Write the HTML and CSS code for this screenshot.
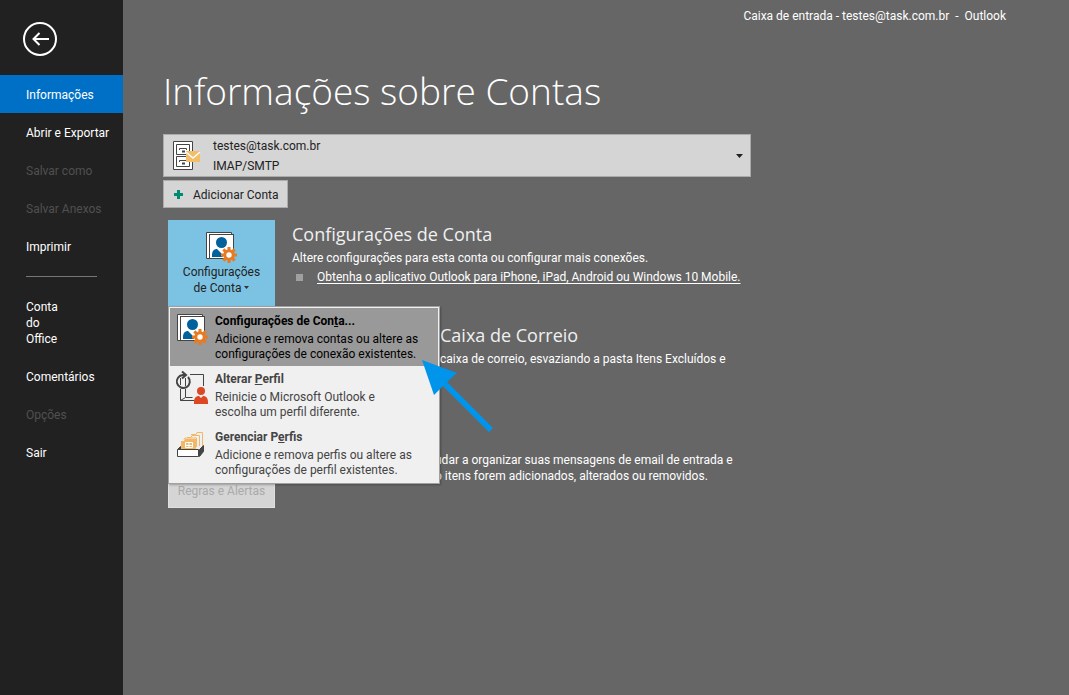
FILE: index.html
```html
<!DOCTYPE html>
<html lang="pt-BR">
<head>
<meta charset="utf-8">
<title>Caixa de entrada - Outlook</title>
<link rel="stylesheet" href="styles.css">
</head>
<body>
<svg class="defs" aria-hidden="true">
  <symbol id="account" viewBox="0 0 32 32">
    <path d="M.5 26.500V.500H25.500V2.500H3.500V26.500z" fill="#fff" stroke="#444"/>
    <rect x="3.500" y="2.500" width="24" height="24" fill="#fff" stroke="#444"/>
    <circle cx="15.500" cy="10.500" r="5.500" fill="#00619c"/>
    <path d="M6 25v-2c0-4 2-6 5-6l4 4 2 4z" fill="#00619c"/>
    <g transform="translate(23 23)">
      <circle r="4.200" fill="#fff" stroke="#e87b22" stroke-width="3"/>
      <g fill="#e87b22">
        <path id="tooth" d="M-1.500-8h3v3h-3zM-1.500 5h3v3h-3z"/><use href="#tooth" transform="rotate(45)"/><use href="#tooth" transform="rotate(90)"/><use href="#tooth" transform="rotate(135)"/>
      </g>
    </g>
  </symbol>
</svg>
<div class="app">
  <nav class="sidebar">
    <button class="back" aria-label="Voltar">
      <svg width="34" height="34" viewBox="0 0 34 34" fill="none" stroke="#fff" stroke-width="2"><circle cx="17" cy="17" r="16"/><path d="M26 17H11M16.500 11l-6 6 6 6"/></svg>
    </button>
    <button class="item active">Informações</button>
    <button class="item">Abrir e Exportar</button>
    <button class="item" disabled>Salvar como</button>
    <button class="item" disabled>Salvar Anexos</button>
    <button class="item">Imprimir</button>
    <hr>
    <button class="item office">Conta do Office</button>
    <button class="item">Comentários</button>
    <button class="item" disabled>Opções</button>
    <button class="item">Sair</button>
  </nav>
  <main>
    <div class="caption">Caixa de entrada - testes@task.com.br &nbsp;-&nbsp; Outlook</div>
    <h1>Informações sobre Contas</h1>
    <button class="account">
      <svg width="28" height="30" viewBox="0 0 28 30" fill="none" stroke="#444">
        <path d="M.5.500h19v28H.5z" fill="#fff"/><path d="M3.500 3.500h13v10h-13zM3.500 15.500h13v10h-13zM6.500 9V7.500h7V9M6.500 21v-1.500h7V21"/><path d="M9 10.500h3M9 22.500h3" stroke-width="2"/>
        <path d="M13 10h14v11H13z" fill="#f4bd68" stroke="none"/><path d="M13 11l7 6 7-6" stroke="#fff" stroke-width="1.500"/>
      </svg>
      <span class="who">testes@task.com.br<br>IMAP/SMTP</span>
      <svg width="7" height="4" viewBox="0 0 7 4"><path d="M0 0h7L3.500 4z" fill="#222"/></svg>
    </button>
    <button class="add">
      <svg width="9" height="9" viewBox="0 0 9 9"><path d="M3 0h3v3h3v3H6v3H3V6H0V3h3z" fill="#008b70"/></svg>
      Adicionar Conta
    </button>
    <div class="sections">
      <div class="launcher">
        <button class="tile selected" aria-haspopup="menu" aria-expanded="true">
          <svg width="32" height="32"><use href="#account"/></svg>
          <span>Configurações<br>de Conta <svg width="5" height="3" viewBox="0 0 5 3"><path d="M0 0h5L2.500 3z" fill="#333"/></svg></span>
        </button>
        <div class="menu" role="menu">
          <button class="option current" role="menuitem">
            <svg width="32" height="32"><use href="#account"/></svg>
            <span><b>Configurações de Con<u>t</u>a...</b>Adicione e remova contas ou altere as<br>configurações de conexão existentes.</span>
          </button>
          <button class="option" role="menuitem">
            <svg width="32" height="32" viewBox="0 0 32 32" fill="none" stroke="#444">
              <path d="M13 2.500h13.500V14M3.500 17v11.500H17M8.500 17v8M3.500 28.500l5-3h7M3.500 6v7M8.500 6v8"/>
              <path d="M11 5a6.500 6.500 0 1 1-5-2H8M5 -.5l4 3.500-4 3.500" stroke-width="2"/>
              <circle cx="24" cy="19" r="4" fill="#dc4724" stroke="none"/><path d="M17 32v-2c0-4 2-6 5-6l2 2 2-2c3 0 5 2 5 6v2z" fill="#dc4724" stroke="none"/>
            </svg>
            <span><b>Alterar <u>P</u>erfil</b>Reinicie o Microsoft Outlook e<br>escolha um perfil diferente.</span>
          </button>
          <button class="option" role="menuitem">
            <svg width="32" height="32" viewBox="0 0 32 32" fill="none" stroke="#f2b767">
              <path d="M14 4.500h5l1-2h5.500V16M10 7.500h4l1-2h7.500V16M7 9.500l1-1.500h11.500V17"/><path d="M4 20V11h3l1-2h11v11z" fill="#f2b767" stroke="none"/><path d="M8.500 12.500h7v5h-7zM8 15.500h8M12 12v5" stroke="#fff"/>
              <path d="M22.500 19.500l4-4v6l-4 5zM.5 19.500l3-3v3z" fill="#444" stroke="#444"/><path d="M.5 19.500h21v7H.5z" fill="#fff" stroke="#444"/>
            </svg>
            <span><b>Gerenciar P<u>e</u>rfis</b>Adicione e remova perfis ou altere as<br>configurações de perfil existentes.</span>
          </button>
        </div>
        <svg class="pointer" width="72" height="74" viewBox="0 0 72 74" aria-hidden="true"><path d="M0 0l35 13-10 9 46 46-4 4-46-46-9 9z" fill="#0094ea"/></svg>
      </div>
      <section>
        <h2>Configurações de Conta</h2>
        <p>Altere configurações para esta conta ou configurar mais conexões.</p>
        <ul><li><a href="#">Obtenha o aplicativo Outlook para iPhone, iPad, Android ou Windows 10 Mobile.</a></li></ul>
      </section>
      <section class="mailbox">
        <h2>Caixa de Correio</h2>
        <p>caixa de correio, esvaziando a pasta Itens Excluídos e</p>
      </section>
      <button class="tile rules" disabled>Regras e Alertas</button>
      <section class="alerts">
        <p>udar a organizar suas mensagens de email de entrada e<br>o itens forem adicionados, alterados ou removidos.</p>
      </section>
    </div>
  </main>
</div>
</body>
</html>
```
FILE: styles.css
```css
* { box-sizing: border-box; }
body { margin: 0; background: #666; color: #fff; font: 12px/16px Roboto, "Open Sans", sans-serif; }
button { font: inherit; color: inherit; text-align: left; border: 0; background: none; padding: 0; border-radius: 0; }
h1, h2, p, ul { margin: 0; padding: 0; font-weight: 400; }
svg { flex: none; overflow: visible; }
.defs { position: absolute; width: 0; height: 0; }
.app { display: grid; grid-template-columns: 123px 1fr; min-height: 100vh; }

.sidebar { display: flex; flex-direction: column; background: #212121; padding-top: 22px; }
.back { align-self: flex-start; margin: 0 0 19px 23px; height: 34px; }
.item { min-height: 38px; padding: 12px 0 10px 26px; white-space: nowrap; }
.item.active { background: #0070c6; }
.item:disabled { color: #505050; }
.item.office { white-space: normal; padding-right: 60px; }
.sidebar hr { width: 71px; margin: 11px 0 10px 26px; border: 0; border-top: 1px solid #777; }

main { padding: 8px 63px 8px 40px; }
.caption { text-align: right; }
h1, h2 { font-family: "Open Sans", "Noto Sans", sans-serif; }
h1 { font-size: 37px; line-height: 56px; font-weight: 300; margin: 39px 0 15px; }
.account { display: flex; align-items: center; width: 588px; max-width: 100%; height: 43px; padding: 0 7px 0 9px; background: #d5d5d5; border: 1px solid #ababab; color: #222; }
.who { flex: 1; margin-left: 12px; line-height: 20px; }
.add { display: flex; align-items: center; gap: 10px; height: 28px; margin-top: 3px; padding: 1px 8px 0 10px; background: #d5d5d5; border: 1px solid #ababab; color: #222; }

.sections { display: grid; grid-template-columns: 107px 1fr; grid-template-rows: repeat(3, 86px); gap: 15px 17px; margin: 12px 0 0 5px; }
.launcher { position: relative; }
.tile { width: 100%; height: 86px; text-align: center; color: #222; }
.tile.selected { display: flex; flex-direction: column; align-items: center; padding-top: 12px; background: #7cc2e3; }
.tile span svg { vertical-align: 3px; }
.tile.rules { grid-column: 1; background: #d5d5d5; border: 1px solid #e0e0e0; color: #aaa; padding-top: 52px; }
h2 { font-size: 18px; line-height: 28px; color: #f0f0f0; }
section { white-space: nowrap; }
section p { margin-top: 2px; }
ul { list-style: none; }
li { display: flex; align-items: center; gap: 14px; padding-left: 4px; margin-top: 3px; }
li::before { content: ""; width: 7px; height: 7px; background: #a0a0a0; }
li a { color: #fff; text-underline-offset: 2px; }
.mailbox { grid-column: 2; padding-left: 148px; }
.alerts { padding: 28px 0 0 143px; }

.menu { position: absolute; z-index: 1; top: 86px; left: 0; width: 272px; padding: 1px; background: #f0f0f0; border: 1px solid #a0a0a0; box-shadow: 1px 1px 2px #0004; color: #444; }
.option { display: flex; gap: 6px; width: 100%; height: 58px; padding: 6px 0 0 7px; line-height: 15px; white-space: nowrap; }
.option b { display: block; margin-bottom: 3px; }
.option.current { background: #999; color: #000; }
.pointer { position: absolute; z-index: 2; left: 254px; top: 140px; }
```
